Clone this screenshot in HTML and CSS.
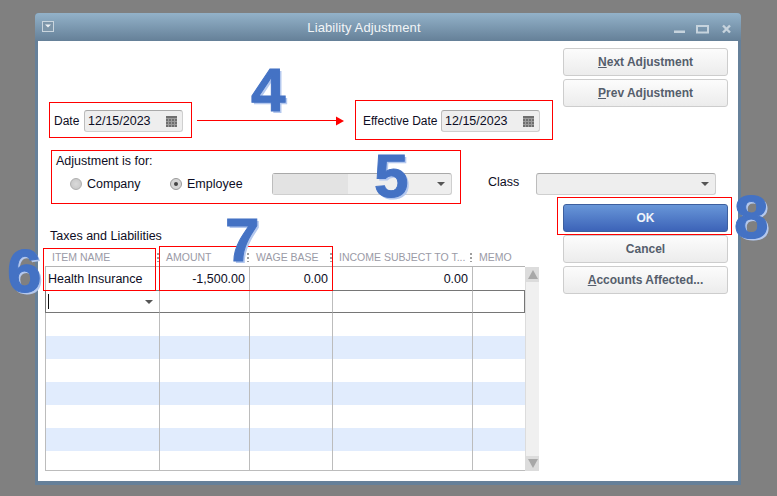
FILE: index.html
```html
<!DOCTYPE html>
<html lang="en">
<head>
<meta charset="utf-8">
<title>Liability Adjustment</title>
<link rel="stylesheet" href="styles.css">
</head>
<body>
<div class="desktop">
  <div class="window">
    <header class="titlebar">
      <svg class="sysicon" width="12" height="11" viewBox="0 0 12 11"><rect x="0.5" y="0.5" width="11" height="10" fill="#7d96aa" stroke="#c9d5de"/><path d="M3 3.5h6l-3 3z" fill="#eef2f5"/></svg>
      <div class="title">Liability Adjustment</div>
      <svg class="winbtns" width="60" height="12" viewBox="0 0 60 12"><rect x="0" y="8.5" width="11" height="2.5" fill="#c6d3dd"/><rect x="23" y="4" width="11" height="6.5" fill="none" stroke="#c6d3dd" stroke-width="2"/><path d="M49 3.5l7 7M56 3.5l-7 7" stroke="#c6d3dd" stroke-width="2.4" fill="none"/></svg>
    </header>
    <main class="content">
      <section class="top">
        <div class="dates">
          <div class="field field-date">
            <span class="lbl">Date</span>
            <div class="input date"><span>12/15/2023</span><svg width="11" height="11" viewBox="0 0 11 11"><rect width="11" height="11" fill="#6f6f6f"/><path d="M0 2.5h11M2.5 3v8M5.5 3v8M8.5 3v8M0 5.5h11M0 8.5h11" stroke="#9c9c9c" stroke-width="1"/></svg></div>
          </div>
          <div class="field field-eff">
            <span class="lbl">Effective Date</span>
            <div class="input date"><span>12/15/2023</span><svg width="11" height="11" viewBox="0 0 11 11"><rect width="11" height="11" fill="#6f6f6f"/><path d="M0 2.5h11M2.5 3v8M5.5 3v8M8.5 3v8M0 5.5h11M0 8.5h11" stroke="#9c9c9c" stroke-width="1"/></svg></div>
          </div>
        </div>
        <div class="side side-top">
          <button class="btn"><u>N</u>ext Adjustment</button>
          <button class="btn"><u>P</u>rev Adjustment</button>
        </div>
      </section>
      <section class="mid">
        <div class="adjust">
          <div class="adjust-title">Adjustment is for:</div>
          <div class="adjust-row">
            <label class="radio r-company"><i class="dot"></i>Company</label>
            <label class="radio r-employee"><i class="dot on"></i>Employee</label>
            <div class="input select emp"><b class="masked"></b><i class="caret"></i></div>
          </div>
        </div>
        <div class="classwrap">
          <span class="lbl">Class</span>
          <div class="input select cls"><i class="caret"></i></div>
        </div>
      </section>
      <section class="bottom">
        <div class="left">
          <h2 class="heading">Taxes and Liabilities</h2>
          <div class="gridwrap">
            <table class="grid">
              <colgroup><col class="c1"><col class="c2"><col class="c3"><col class="c4"><col class="c5"></colgroup>
              <thead><tr><th>ITEM NAME</th><th>AMOUNT</th><th>WAGE BASE</th><th>INCOME SUBJECT TO T...</th><th>MEMO</th></tr></thead>
              <tbody>
                <tr><td>Health Insurance</td><td class="num">-1,500.00</td><td class="num">0.00</td><td class="num">0.00</td><td></td></tr>
                <tr class="sel"><td><div class="editcell"><i class="cursor"></i><i class="caret"></i></div></td><td></td><td></td><td></td><td></td></tr>
                <tr><td></td><td></td><td></td><td></td><td></td></tr>
                <tr class="stripe"><td></td><td></td><td></td><td></td><td></td></tr>
                <tr><td></td><td></td><td></td><td></td><td></td></tr>
                <tr class="stripe"><td></td><td></td><td></td><td></td><td></td></tr>
                <tr><td></td><td></td><td></td><td></td><td></td></tr>
                <tr class="stripe"><td></td><td></td><td></td><td></td><td></td></tr>
                <tr class="last"><td></td><td></td><td></td><td></td><td></td></tr>
              </tbody>
            </table>
            <div class="scrollbar">
              <div class="sb-btn"><i class="tri up"></i></div>
              <div class="sb-btn"><i class="tri down"></i></div>
            </div>
          </div>
        </div>
        <div class="side side-bottom">
          <button class="btn primary">OK</button>
          <button class="btn">Cancel</button>
          <button class="btn"><u>A</u>ccounts Affected...</button>
        </div>
      </section>
    </main>
  </div>
</div>

<div class="mark m-date"></div>
<div class="mark m-eff"></div>
<div class="mark m-adj"></div>
<div class="mark m-item"></div>
<div class="mark m-amt"></div>
<div class="mark m-ok"></div>
<svg class="arrow" width="150" height="10" viewBox="0 0 150 10"><path d="M0 4.5h140" stroke="#f00" stroke-width="1"/><path d="M139 0.5l8 4.5-8 4.5z" fill="#f00"/></svg>
<span class="num-mark n4">4</span>
<span class="num-mark n5">5</span>
<span class="num-mark n6">6</span>
<span class="num-mark n7">7</span>
<span class="num-mark n8">8</span>
</body>
</html>
```
FILE: styles.css
```css
* { box-sizing: border-box; }
html, body { margin: 0; padding: 0; }
body {
  width: 777px;
  height: 496px;
  overflow: hidden;
  position: relative;
  background: #808080;
  font: 12.5px/16px "Liberation Sans", Arial, sans-serif;
  color: #0d0d24;
}
.desktop { padding: 13px 36px 0 35px; }
.window {
  height: 472px;
  background: #668099;
  border-radius: 4px 4px 0 0;
  padding: 0 3px 4px;
}
.titlebar {
  height: 28px;
  margin: 0 -3px;
  padding: 0 7px 0 7px;
  background: linear-gradient(#93b2c9, #658098);
  border-radius: 4px 4px 0 0;
  display: flex;
  align-items: center;
}
.sysicon { flex: none; margin-top: -1px; }
.title {
  flex: 1;
  text-align: center;
  color: #f2f5f7;
  font-size: 13px;
  letter-spacing: 0.1px;
  margin-top: 1px;
}
.winbtns { flex: none; margin-top: 2px; }
.content { background: #fff; height: 440px; }
.top { display: flex; height: 91px; }
.dates { width: 525px; padding: 69px 0 0 16px; display: flex; }
.field { display: flex; align-items: center; }
.field-date { width: 309px; gap: 7px; }
.field-date .lbl { width: 23px; font-size: 12px; }
.field-eff { gap: 0; }
.field-eff .lbl { width: 78px; font-size: 12px; }
.input {
  height: 22px;
  background: #eeeeee;
  border: 1px solid #cfcfcf;
  border-top-color: #a9a9a9;
  border-left-color: #bdbdbd;
  border-radius: 3px;
  display: flex;
  align-items: center;
}
.date { width: 99px; padding: 0 5px 0 3px; justify-content: space-between; }
.side { width: 165px; display: flex; flex-direction: column; gap: 3px; }
.side-top { padding-top: 7px; }
.btn {
  height: 28px;
  padding: 0;
  background: linear-gradient(#fcfcfc, #ececec);
  border: 1px solid #cdcdcd;
  border-radius: 3px;
  font: bold 12px/16px "Liberation Sans", Arial, sans-serif;
  color: #555e6c;
  text-align: center;
}
.primary {
  background: linear-gradient(#6896d8, #3c63b8);
  border-color: #3d5f9e;
  color: #eef3fa;
}
.mid { display: flex; height: 42px; margin-top: 21px; }
.adjust { width: 450px; padding-left: 18px; }
.adjust-title { height: 20px; }
.adjust-row { display: flex; align-items: center; }
.radio { display: flex; align-items: center; gap: 5px; }
.r-company { width: 100px; margin-left: 14px; }
.r-employee { width: 102px; }
.dot {
  width: 12px;
  height: 12px;
  border-radius: 50%;
  background: radial-gradient(#dadada, #c4c4c4);
  border: 1px solid #aeaeae;
  display: flex;
  align-items: center;
  justify-content: center;
}
.dot.on { background: #d6d6d6; border-color: #9a9a9a; }
.dot.on::after { content: ""; width: 4px; height: 4px; border-radius: 50%; background: #444; }
.select { justify-content: space-between; }
.emp { width: 180px; padding-right: 6px; }
.masked { width: 75px; height: 20px; background: #e3e3e3; }
.caret {
  width: 0;
  height: 0;
  border-left: 4px solid transparent;
  border-right: 4px solid transparent;
  border-top: 4px solid #555;
}
.classwrap { display: flex; align-items: center; padding-top: 20px; height: 42px; margin-left: 0; }
.classwrap .lbl { width: 48px; margin-top: -4px; }
.cls { width: 180px; justify-content: flex-end; padding-right: 6px; }
.bottom { display: flex; }
.left { width: 525px; padding: 34px 0 0 7px; }
.heading { margin: 0 0 4px 5px; font: 12.5px/14px "Liberation Sans", Arial, sans-serif; color: #0d0d24; }
.gridwrap { display: flex; }
.grid { border-collapse: separate; border-spacing: 0; table-layout: fixed; width: 480px; }
.c1 { width: 115px; } .c2 { width: 90px; } .c3 { width: 83px; } .c4 { width: 140px; } .c5 { width: 52px; }
.grid th {
  height: 20px;
  padding: 0 0 0 6px;
  font: 10.5px/12px "Liberation Sans", Arial, sans-serif;
  color: #9a9aa6;
  text-align: left;
  white-space: nowrap;
  overflow: hidden;
  border-bottom: 1px solid #b4b4b4;
  background: repeating-linear-gradient(#9e9e9e 0 2px, transparent 2px 4px) right 1px top 6px / 2px 9px no-repeat;
}
.grid th:last-child { background: none; }
.grid th:first-child { padding-left: 7px; }
.grid td {
  height: 23px;
  padding: 0 4px;
  border-right: 1px solid #bcbcbc;
}
.grid td:first-child { border-left: 1px solid #bcbcbc; padding-left: 2px; }
.grid td:last-child { border-right: 0; }
.num { text-align: right; }
.stripe td { background: #e1ecfd; }
.sel td { border-top: 1px solid #767676; border-bottom: 1px solid #767676; }
.grid .sel td:first-child { border-left-color: #767676; }
.grid .sel td:last-child { border-right: 1px solid #767676; }
.grid .last td { height: 20px; border-bottom: 1px solid #bcbcbc; }
.editcell { display: flex; justify-content: space-between; align-items: center; padding-right: 2px; }
.cursor { width: 1px; height: 15px; background: #111; }
.scrollbar {
  width: 14px;
  height: 204px;
  margin-top: 20px;
  margin-left: 0;
  background: #f0f0f0;
  border-left: 1px solid #dcdcdc;
  display: flex;
  flex-direction: column;
  justify-content: space-between;
}
.sb-btn { height: 15px; background: #dcdcdc; display: flex; align-items: center; justify-content: center; }
.tri { width: 0; height: 0; border-left: 5px solid transparent; border-right: 5px solid transparent; }
.tri.up { border-bottom: 9px solid #a8a8a8; }
.tri.down { border-top: 9px solid #a8a8a8; }
.side-bottom { padding-top: 9px; }

/* annotations drawn over the dialog */
.mark { position: absolute; border: 1px solid #f00; }
.m-date { left: 49px; top: 102px; width: 143px; height: 36px; }
.m-eff { left: 355px; top: 100px; width: 198px; height: 40px; }
.m-adj { left: 51px; top: 150px; width: 410px; height: 54px; }
.m-item { left: 43px; top: 248px; width: 113px; height: 43px; }
.m-amt { left: 159px; top: 246px; width: 174px; height: 45px; }
.m-ok { left: 557px; top: 197px; width: 175px; height: 38px; }
.arrow { position: absolute; left: 197px; top: 116px; }
.num-mark {
  position: absolute;
  font: bold 62px/62px "Liberation Sans", Arial, sans-serif;
  color: #4472c4;
  -webkit-text-stroke: 1px #4472c4;
  text-shadow: 2px 2px 0 #b4c8ee;
}
.n4 { left: 251px; top: 59px; }
.n5 { left: 374px; top: 145px; }
.n6 { left: 7px; top: 240px; }
.n7 { left: 225px; top: 209px; }
.n8 { left: 734px; top: 186px; }
```
